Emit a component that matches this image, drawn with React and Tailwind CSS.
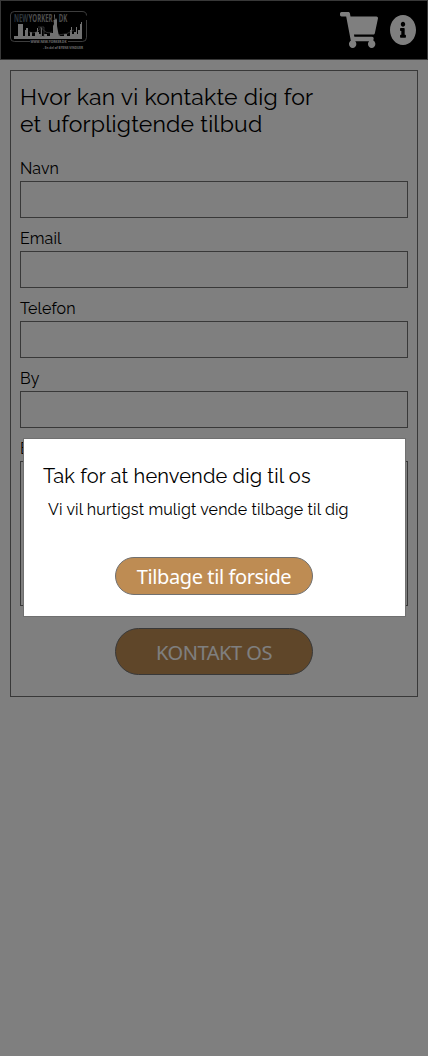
import { FaShoppingCart, FaInfoCircle } from "react-icons/fa";

function Logo() {
  return (
    <svg className="block h-[40px] w-[80px]" viewBox="0 0 80 40" fill="#fff" role="img" aria-label="Newyorker.dk">
      <path
        d="M20 31.500H4.500Q.5 31.500 .5 28V5Q.5 1.500 4.500 1.500H72Q76.500 1.500 76.500 5.500M76.500 10V27.500Q76.500 31.500 72.500 31.500H58"
        fill="none"
        stroke="#999"
        strokeWidth=".8"
      />
      <g className="font-['Open_Sans',sans-serif] font-bold" fontSize="10.500">
        <text transform="translate(4 12) scale(.58 1)" fill="#5c6c78">NEW</text>
        <text transform="translate(18.500 12) scale(.58 1)" fill="#999">YORKER</text>
        <text transform="translate(48.800 12) scale(.58 1)" fill="#999">DK</text>
      </g>
      <path
        d="M4 29V26H8V14H13V26H15V20H16V18H18V26H20V22H22V26H25V22H27V18H28V22H29V24H31V18H32V26H34V24H37V26H40V23H43V16L44 14L43.500 10H44.500L44 4L45 5V10L46 8L47 10V16L48.500 24L50 26H54V24H57V26H60V20H61V17H62V24H64V22H66V17H67V24H68V20H70V14H71V12H72V29Z"
        fill="#e2e2e2"
      />
      <path d="M19 22Q27 25 31 17Q36 25 42 22M28 17H34V27M31 17V27M48 25Q57 25 64 20" fill="none" stroke="#999" strokeWidth=".6" />
      <g className="font-['Open_Sans',sans-serif] font-bold" fill="#ddd">
        <text x="20.500" y="33" fontSize="3.600" textLength="36" lengthAdjust="spacingAndGlyphs">WWW.NEW-YORKER.DK</text>
        <text x="33" y="38.500" fontSize="3.600" textLength="40" lengthAdjust="spacingAndGlyphs">- En del af BYENS VINDUER</text>
      </g>
    </svg>
  );
}

function Field({ label, area }) {
  return (
    <label className="block">
      <span className="block h-[25px] pt-px text-[16px] leading-[24px] tracking-[0.1px]">{label}</span>
      {area ? (
        <textarea className="block h-[145px] w-full resize-none border border-[#707070] bg-white" />
      ) : (
        <input className="mb-[8px] block h-[37px] w-full border border-[#707070] bg-white" />
      )}
    </label>
  );
}

export default function App() {
  return (
    <div className="min-h-screen bg-white font-['Raleway','Lato',sans-serif] text-black">
      <header className="flex h-[60px] items-start justify-between border border-[#707070] bg-black pt-[9px] pr-[11px] pl-[9px] text-white">
        <Logo />
        <div className="flex gap-[12px]">
          <FaShoppingCart className="mt-[2px] h-[36px] w-[38px]" preserveAspectRatio="none" />
          <FaInfoCircle className="mt-[5px] h-[30px] w-[26px]" preserveAspectRatio="none" viewBox="8 8 496 496" />
        </div>
      </header>

      <main className="mx-[10px] mt-[10px] h-[627px] border border-[#707070] px-[9px] pt-[12px]">
        <h1 className="mb-[19px] text-[23px] leading-[27px] tracking-[0.17px]">
          <span className="block whitespace-nowrap">Hvor kan vi kontakte dig for</span>
          <span className="block whitespace-nowrap">et uforpligtende tilbud</span>
        </h1>
        <form className="flex flex-col">
          <Field label="Navn" />
          <Field label="Email" />
          <Field label="Telefon" />
          <Field label="By" />
          <Field label="Besked" area />
          <button
            type="button"
            className="mt-[22px] h-[47px] w-[198px] self-center rounded-full border border-[#707070] bg-[#be8c53] pt-[2px] font-['Segoe_UI','Noto_Sans','Open_Sans',sans-serif] text-[20px] tracking-[-0.45px] text-white"
          >
            KONTAKT OS
          </button>
        </form>
      </main>

      <div className="fixed inset-0 bg-black/50">
        <section
          role="dialog"
          aria-modal="true"
          className="mt-[438px] ml-[23px] flex h-[179px] w-[383px] flex-col border border-[#707070] bg-white px-[19px] pt-[22px]"
        >
          <h2 className="text-[20px] leading-[30px] whitespace-nowrap tracking-[0.13px]">Tak for at henvende dig til os</h2>
          <p className="mt-[7px] pl-[5px] text-[16px] leading-[24px] whitespace-nowrap tracking-[0.13px]">
            Vi vil hurtigst muligt vende tilbage til dig
          </p>
          <button
            type="button"
            className="mt-[35px] mr-[2px] h-[38px] w-[198px] self-center rounded-full border border-[#707070] bg-[#be8c53] pt-[2px] pl-px font-['Segoe_UI','Noto_Sans','Open_Sans',sans-serif] text-[20px] leading-[30px] tracking-[-0.4px] text-white"
          >
            Tilbage til forside
          </button>
        </section>
      </div>
    </div>
  );
}
